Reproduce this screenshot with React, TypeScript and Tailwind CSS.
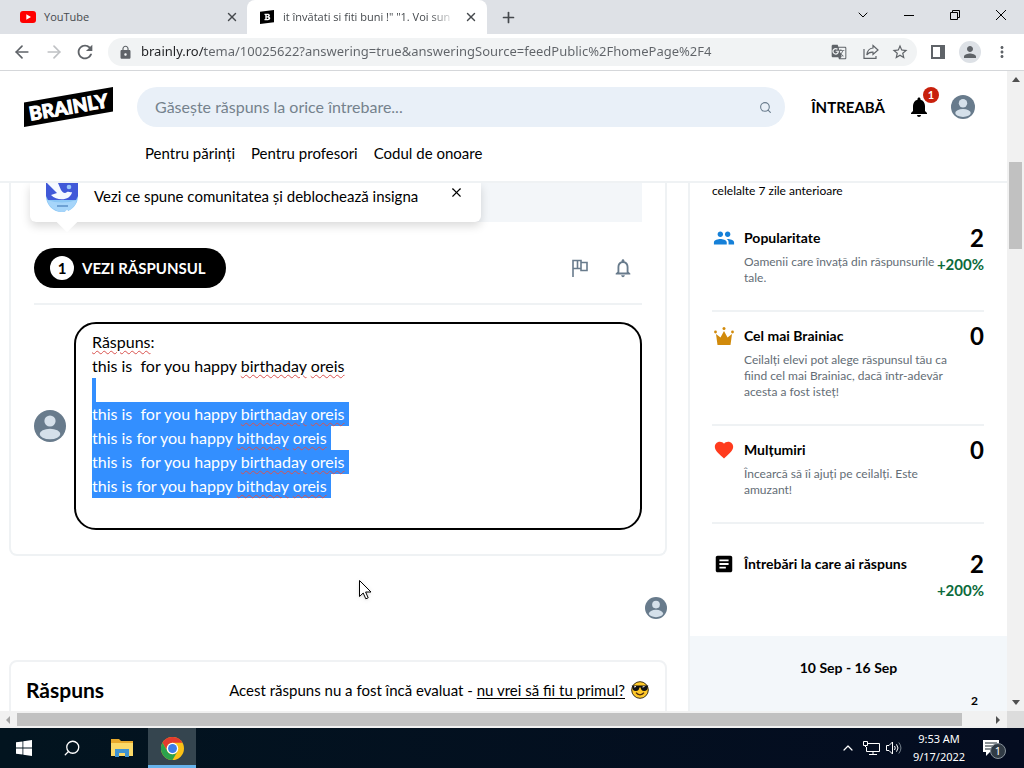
import type { ReactNode } from "react";
import { ArrowLeft, ArrowRight, Plus, Search, X, ChevronDown, ChevronUp } from "lucide-react";
import {
  MdLock,
  MdGTranslate,
  MdStarBorder,
  MdPerson,
  MdMoreVert,
  MdNotifications,
  MdNotificationsNone,
  MdPeople,
  MdFavorite,
  MdArticle,
  MdRefresh,
} from "react-icons/md";

const UI = "font-['Noto_Sans','Open_Sans',sans-serif]";

function Avatar({ className }: { className: string }) {
  return (
    <svg viewBox="0 0 32 32" className={className} aria-hidden="true">
      <circle cx="16" cy="16" r="16" fill="#687b8c" />
      <circle cx="16" cy="11" r="5.6" fill="#d5e0ea" />
      <ellipse cx="16" cy="24" rx="10.3" ry="5.3" fill="#d5e0ea" />
    </svg>
  );
}

function Tabs() {
  return (
    <div className="flex h-[34px] shrink-0 bg-[#dee1e6] font-['Open_Sans',sans-serif] text-[11px] text-[#45494d]">
      <div className="flex w-[247px] items-center pl-5 pr-2">
        <svg viewBox="0 0 16 12" className="h-3 w-4" aria-hidden="true">
          <rect width="16" height="12" rx="3" fill="#f00" />
          <path d="M6.3 3.3v5.4L11 6z" fill="#fff" />
        </svg>
        <button className="ml-2 flex-1 text-left">YouTube</button>
        <button aria-label="Close YouTube"><X className="size-[14px]" strokeWidth={2.4} /></button>
      </div>
      <div className="flex w-60 items-center rounded-t-lg bg-white pl-[13px] pr-[9px]">
        <svg viewBox="0 0 14 14" className="size-[14px] shrink-0" aria-hidden="true">
          <path d="M0 1.800 14 0v12.200L0 14z" fill="#000" />
          <path d="M4.500 3.800h3.200c2.600 0 2.800 2.400 1.300 3 2 .6 1.600 3.400-1.100 3.400H4.500V8.900h.8V5.100h-.8zM6.700 5.100v1.200h1c.8 0 .8-1.200 0-1.200zm0 2.400v1.400h1.100c.9 0 .9-1.400 0-1.400z" fill="#fff" />
        </svg>
        <button className="ml-[9px] min-w-0 flex-1 whitespace-nowrap text-left">
          <span className="inline-block [mask-image:linear-gradient(90deg,#000_88%,#0003)]">it învătati si fiti buni !&quot; &quot;1. Voi sun</span>
        </button>
        <button aria-label="Close tab"><X className="size-[14px]" strokeWidth={2.4} /></button>
      </div>
      <button aria-label="New tab" className="ml-[13px]"><Plus className="size-[17px]" strokeWidth={2.4} /></button>
      <div className="ml-auto flex items-center text-black">
        <button aria-label="Search tabs" className="flex w-[46px] justify-center pb-1"><ChevronDown className="size-4" strokeWidth={1.500} /></button>
        <button aria-label="Minimize" className="flex w-[46px] justify-center pb-1">
          <svg viewBox="0 0 10 10" className="size-[10px]"><path d="M0 5.500h10" stroke="#000" /></svg>
        </button>
        <button aria-label="Restore" className="flex w-[46px] justify-center pb-1">
          <svg viewBox="0 0 10 10" className="size-[10px]" fill="none" stroke="#000"><path d="M.5 2.500h7v7h-7zM2.500 2.500v-2h7v7h-2" /></svg>
        </button>
        <button aria-label="Close" className="flex w-[46px] justify-center pb-1">
          <svg viewBox="0 0 10 10" className="size-[10px]"><path d="m0 0 10 10M10 0 0 10" stroke="#000" /></svg>
        </button>
      </div>
    </div>
  );
}

function Toolbar() {
  return (
    <div className="flex h-[37px] shrink-0 items-center border-b border-[#d5d7da] bg-white pl-3 pr-[13px] text-[#5f6368]">
      <button aria-label="Back"><ArrowLeft className="size-5" /></button>
      <button aria-label="Forward" className="ml-3 text-[#bfc1c4]"><ArrowRight className="size-5" /></button>
      <button aria-label="Reload" className="ml-[10px]"><MdRefresh className="size-[22px]" /></button>
      <div className="ml-3 flex h-7 min-w-0 flex-1 items-center gap-4 rounded-full bg-[#f1f3f4] pl-[10px] pr-2">
        <MdLock className="-mr-2 size-[15px] shrink-0" />
        <input
          aria-label="Address"
          className="min-w-0 flex-1 bg-linear-to-r from-[#202124] from-[64px] to-[#5f6368] to-[64px] bg-clip-text text-[13px] text-transparent outline-none"
          defaultValue="brainly.ro/tema/10025622?answering=true&answeringSource=feedPublic%2FhomePage%2F4"
        />
        <button aria-label="Translate"><MdGTranslate className="size-4" /></button>
        <button aria-label="Share">
          <svg viewBox="0 0 16 16" className="size-4" fill="none" stroke="currentColor" strokeWidth="1.200">
            <path d="M1 5v9.400h12V12M10 1.500l5 4.500-5 4.500V8.200C7 8 5.300 8.700 3.800 11 4.200 7 6.300 4.300 10 4z" />
          </svg>
        </button>
        <button aria-label="Bookmark" className="-ml-1"><MdStarBorder className="size-[18px]" /></button>
      </div>
      <button aria-label="Side panel" className="ml-[14px]">
        <svg viewBox="0 0 14 14" className="size-[14px]"><path d="M0 0h14v14H0zM2 2v10h7V2z" fill="currentColor" fillRule="evenodd" /></svg>
      </button>
      <button aria-label="Profile" className="ml-[14px] flex size-[22px] items-center justify-center rounded-full bg-[#dde1e6]"><MdPerson className="size-[18px]" /></button>
      <button aria-label="Menu" className="ml-3"><MdMoreVert className="size-[18px]" /></button>
    </div>
  );
}

function SiteHeader() {
  return (
    <header className="shrink-0 border-b-2 border-[#eff2f4] bg-white pb-[18px] pt-4">
      <div className="flex items-center pl-6 pr-8">
        <a href="#" aria-label="Brainly" className="shrink-0">
          <svg viewBox="0 0 89 40" className="h-10 w-[89px]">
            <path d="M0 15.500 89 0v24.500L0 40z" />
            <text x="44.500" y="27" transform="rotate(-9.900 44.500 20)" textAnchor="middle" fill="#fff" stroke="#fff" strokeWidth="1" fontFamily="Lato" fontWeight="900" fontSize="19">BRAINLY</text>
          </svg>
        </a>
        <label className="ml-6 flex h-10 min-w-0 flex-1 items-center rounded-full bg-[#e9f0f8] pl-[18px] pr-[13px]">
          <input aria-label="Caută" placeholder="Găsește răspuns la orice întrebare..." className="min-w-0 flex-1 text-base text-black outline-none placeholder:text-[#75828d]" />
          <Search className="size-[13px] text-[#687b8c]" />
        </label>
        <a href="#" className="ml-[26px] text-[15px] font-bold">ÎNTREABĂ</a>
        <button aria-label="Notificări" className="relative ml-[22px]">
          <MdNotifications className="size-6" />
          <span className="absolute -top-2 left-4 flex size-4 items-center justify-center rounded-full bg-[#c8200c] text-[11px] font-bold text-white">1</span>
        </button>
        <button aria-label="Profil" className="ml-5"><Avatar className="size-6" /></button>
      </div>
      <nav className="flex gap-4 pl-[145px] pt-4 text-[15px] leading-5">
        <a href="#">Pentru părinți</a>
        <a href="#">Pentru profesori</a>
        <a href="#">Codul de onoare</a>
      </nav>
    </header>
  );
}

function Typo({ children }: { children: ReactNode }) {
  return <span className="underline decoration-[#d9534f] decoration-wavy decoration-1 underline-offset-2">{children}</span>;
}

const selected = [
  { lead: "this is  for you happy ", word: "birthaday" },
  { lead: "this is for you happy ", word: "bithday" },
  { lead: "this is  for you happy ", word: "birthaday" },
  { lead: "this is for you happy ", word: "bithday" },
];

function Question() {
  return (
    <section className="relative rounded-b-lg border-2 border-t-0 border-[#eff2f4] px-[23px] pb-6">
      <div className="h-[39px] bg-[#f3f6f9]" />
      <div className="absolute left-[19px] top-0 flex h-[39px] w-[451px] items-start rounded-b-md bg-white pl-4 pr-[17px] shadow-[0_4px_10px_rgba(0,0,0,0.15)]">
        <svg viewBox="0 0 32 29" className="h-[29px] w-8 shrink-0" aria-hidden="true">
          <path d="M0 0h32v13c0 8-6 16-16 16S0 21 0 13z" fill="#8bc7f5" />
          <path d="M0 0h32v13l-2 4H2l-2-4z" fill="#4159d8" />
          <path d="M1 0h11l3 7c2 3 4 4 6 2 2-1 3 1 5 0-1 8-14 10-21 3l6-2z" fill="#f6f9ff" />
          <path d="M1 17q15 5 30 0-3 11-15 12Q4 27 1 17z" fill="#a6d5fa" />
          <circle cx="23" cy="4" r="2.300" fill="#9bc8fa" />
          <path d="M11 23h11" stroke="#356cae" />
        </svg>
        <span className="ml-4 flex-1 whitespace-nowrap text-[15px] leading-[26px]">Vezi ce spune comunitatea și deblochează insigna</span>
        <button aria-label="Închide" className="pt-[2px]"><X className="size-[15px]" strokeWidth={1.800} /></button>
        <span className="absolute left-[29px] top-[30px] size-4 rotate-45 bg-white" />
      </div>
      <div className="flex items-center border-b-2 border-[#eff2f4] pb-[15px] pt-[26px]">
        <button className="flex h-10 items-center gap-2 rounded-full bg-black px-4 pr-5 text-[15px] font-bold text-white">
          <span className="flex size-6 items-center justify-center rounded-full bg-white text-black">1</span>
          VEZI RĂSPUNSUL
        </button>
        <button aria-label="Raportează" className="ml-auto text-[#687b8c]">
          <svg viewBox="0 0 16 18" className="h-[18px] w-4" fill="none" stroke="currentColor" strokeWidth="1.600"><path d="M1 18V1.500h8v2h6v8H9v-2H1M5.500 1.500v8M9 3.500v6" /></svg>
        </button>
        <button aria-label="Urmărește" className="ml-6 mr-2 text-[#687b8c]"><MdNotificationsNone className="size-[22px]" /></button>
      </div>
      <div className="mt-[17px] flex items-center gap-2">
        <Avatar className="size-8 shrink-0" />
        <div role="textbox" aria-label="Răspuns" contentEditable suppressContentEditableWarning spellCheck={false} className="min-h-[208px] flex-1 whitespace-pre rounded-[22px] border-2 border-black px-4 py-[6px] text-base leading-6 outline-none">
          <div><Typo>Răspuns</Typo>:</div>
          <div>this is  for you happy <Typo>birthaday</Typo> <Typo>oreis</Typo></div>
          <div className="h-6 w-1 bg-[#338fff]" />
          {selected.map((line, i) => (
            <div key={i} className="w-fit bg-[#338fff] pr-1 text-white">
              {line.lead}<Typo>{line.word}</Typo> <Typo>oreis</Typo>
            </div>
          ))}
        </div>
      </div>
    </section>
  );
}

function Sunglasses() {
  return (
    <svg viewBox="0 0 18 18" className="size-[18px] shrink-0" role="img" aria-label="emoji">
      <circle cx="9" cy="9" r="8.300" fill="#ffc928" stroke="#3c2f12" />
      <path d="M.7 4.500h16.600l-.5 1.300c-.2 2.800-1 4.200-3.700 4.200-2.400 0-3-1.400-3.500-3.400H8.400C8 8.600 7.300 10 4.900 10 2.200 10 1.400 8.600 1.200 5.800z" fill="#111" />
      <path d="M5 11.700c2 2.800 6 2.800 8 0" fill="none" stroke="#4e2a10" strokeWidth="1.300" />
      <path d="m3 6 2-.5M11.500 6l2-.5" stroke="#fff" />
    </svg>
  );
}

function Crown() {
  return (
    <svg viewBox="0 0 20 18" className="h-[18px] w-5" fill="#d18a0b" aria-hidden="true">
      <path d="m2 7 4.500 3.500L10 4l3.500 6.500L18 7l-1.500 11h-13z" />
      <circle cx="1.500" cy="5" r="1.400" /><circle cx="10" cy="1.500" r="1.500" /><circle cx="18.500" cy="5" r="1.400" />
    </svg>
  );
}

interface StatProps { icon: ReactNode; title: string; lines?: string[]; value: number; delta?: string }

function Stat({ icon, title, lines = [], value, delta }: StatProps) {
  return (
    <div className="flex">
      <div className="flex h-7 w-6 shrink-0 items-center justify-center">{icon}</div>
      <div className="ml-2 min-w-0 flex-1 whitespace-nowrap">
        <h3 className="text-sm font-bold leading-7">{title}</h3>
        <p className="pt-[2px] text-xs leading-4 text-[#646d76]">
          {lines.map((l) => <span key={l} className="block">{l}</span>)}
        </p>
      </div>
      <div className="text-right">
        <div className="text-2xl font-bold leading-7">{value}</div>
        {delta && <div className="text-[15px] font-bold leading-6 text-[#0c6b3c]">{delta}</div>}
      </div>
    </div>
  );
}

function Sidebar() {
  const divider = "border-b-2 border-[#eff2f4] pb-6";
  return (
    <aside className="flex w-[319px] shrink-0 flex-col border-l-2 border-[#eff2f4]">
      <div className="pl-[22px] pr-[23px]">
        <p className="text-xs leading-4">celelalte 7 zile anterioare</p>
        <div className={`${divider} pt-[25px]`}>
          <Stat icon={<MdPeople className="size-[22px] text-[#1580d8]" />} title="Popularitate" lines={["Oamenii care învață din răspunsurile", "tale."]} value={2} delta="+200%" />
        </div>
        <div className={`${divider} pt-[10px]`}>
          <Stat icon={<Crown />} title="Cel mai Brainiac" lines={["Ceilalți elevi pot alege răspunsul tău ca", "fiind cel mai Brainiac, dacă într-adevăr", "acesta a fost isteț!"]} value={0} />
        </div>
        <div className={`${divider} pt-[10px]`}>
          <Stat icon={<MdFavorite className="size-[22px] text-[#ff3b1d]" />} title="Mulțumiri" lines={["Încearcă să îi ajuți pe ceilalți. Este", "amuzant!"]} value={0} />
        </div>
        <div className="pb-[34px] pt-[26px]">
          <Stat icon={<MdArticle className="size-[22px]" />} title="Întrebări la care ai răspuns" value={2} delta="+200%" />
        </div>
      </div>
      <div className="flex-1 bg-[#f3f7fa] pt-[22px]">
        <div className="text-center text-sm font-bold leading-5">10 Sep - 16 Sep</div>
        <div className="pr-[29px] pt-[15px] text-right text-xs font-bold leading-4">2</div>
      </div>
    </aside>
  );
}

function Taskbar() {
  return (
    <footer className="flex h-10 shrink-0 items-center bg-linear-to-r from-[#02141f] to-[#040c20] text-white">
      <button aria-label="Start" className="flex h-10 w-12 items-center justify-center">
        <svg viewBox="0 0 16 16" className="size-4" fill="#fff"><path d="M0 2.300 6.500 1.400v6.100H0zM7.300 1.300 16 0v7.500H7.300zM0 8.400h6.500v6.200L0 13.700zM7.300 8.400H16V16l-8.700-1.300z" /></svg>
      </button>
      <button aria-label="Search" className="flex h-10 w-12 items-center justify-center"><Search className="size-[18px] -scale-x-100" strokeWidth={1.700} /></button>
      <button aria-label="File Explorer" className="flex h-10 w-[52px] items-center justify-center">
        <svg viewBox="0 0 22 18" className="h-[18px] w-[22px]">
          <path d="M0 0h8l2 2h12v15H0z" fill="#e8a92c" /><path d="M0 4h22v13H0z" fill="#fbd968" />
          <path d="M4 10h14v8h-4v-4H8v4H4z" fill="#3f93d2" />
        </svg>
      </button>
      <button aria-label="Chrome" className="flex h-10 w-12 items-center justify-center border-b-[3px] border-[#67b3ec] bg-[#35454f] pt-[3px]">
        <svg viewBox="0 0 48 48" className="size-[23px]">
          <circle cx="24" cy="24" r="24" fill="#fbc116" />
          <path d="M3.200 12A24 24 0 0 1 44.800 12H24a12 12 0 0 0-10.400 18z" fill="#e33b2e" />
          <path d="M3.200 12A24 24 0 0 0 24 48l10.400-18a12 12 0 0 1-20.800 0z" fill="#2ba24c" />
          <circle cx="24" cy="24" r="12" fill="#fff" /><circle cx="24" cy="24" r="9.300" fill="#3c7de8" />
        </svg>
      </button>
      <div className="ml-auto flex items-center pr-6">
        <button aria-label="Hidden icons"><ChevronUp className="size-4" strokeWidth={1.800} /></button>
        <svg viewBox="0 0 17 15" className="ml-[7px] h-[15px] w-[17px]" fill="none" stroke="#fff" aria-hidden="true">
          <path d="M5 2.500h11.500v8H3.500V6M10 10.500v3M6 13.500h8M.5.500h4v4h-4zM2.500 4.500V6" />
        </svg>
        <svg viewBox="0 0 17 14" className="ml-[6px] h-[14px] w-[17px]" fill="none" stroke="#fff" aria-hidden="true">
          <path d="M.5 4.500h2.500L6.500 1v12L3 9.500H.5zM8.500 5q1.500 2 0 4M10.500 3.300q3 3.700 0 7.400" /><path d="M12.800 1.500q4.300 5.500 0 11" stroke="#77838d" />
        </svg>
        <time className="ml-[8px] w-[56px] whitespace-nowrap text-center text-[11px] leading-[18px]">9:53 AM<br />9/17/2022</time>
        <button aria-label="Notifications" className="relative ml-[15px]">
          <svg viewBox="0 0 18 18" className="size-[18px]"><path d="M1 1h16v12H8l-4 4v-4H1z" fill="#fff" /><path d="M3 4h12M3 7h12M3 10h7" stroke="#17242d" /></svg>
          <span className="absolute left-2 top-1 flex size-4 items-center justify-center rounded-full border border-[#87919a] bg-[#313b45] text-[11px]">1</span>
        </button>
      </div>
    </footer>
  );
}

export default function App() {
  return (
    <div className={`relative flex h-screen flex-col overflow-hidden bg-white ${UI}`}>
      <Tabs />
      <Toolbar />
      <div className="flex min-h-0 flex-1 font-[Lato,sans-serif] text-black">
        <div className="flex min-w-0 flex-1 flex-col">
          <SiteHeader />
          <main className="flex min-h-0 flex-1 overflow-hidden">
            <div className="min-w-0 flex-1 pl-[9px] pr-[21px]">
              <Question />
              <div className="flex justify-end pt-[41px]"><Avatar className="size-[22px]" /></div>
              <section className="mt-[41px] flex h-24 items-start justify-between rounded-t-lg border-2 border-[#f0f2f4] pl-[15px] pr-4 pt-[14px]">
                <h2 className="text-[21px] font-bold leading-7">Răspuns</h2>
                <p className="flex items-center gap-[6px] text-[15px] leading-7">
                  <span>Acest răspuns nu a fost încă evaluat - <a href="#" className="underline underline-offset-2">nu vrei să fii tu primul?</a></span>
                  <Sunglasses />
                </p>
              </section>
            </div>
            <Sidebar />
          </main>
        </div>
        <div className="flex w-[17px] shrink-0 flex-col items-center bg-[#f1f1f1] py-[6px]" aria-hidden="true">
          <svg viewBox="0 0 8 5" className="h-[5px] w-2"><path d="M0 5 4 0l4 5z" fill="#505050" /></svg>
          <div className="mt-[80px] h-[87px] w-[13px] bg-[#c1c1c1]" />
          <svg viewBox="0 0 8 5" className="mt-auto h-[5px] w-2"><path d="M0 0h8L4 5z" fill="#505050" /></svg>
        </div>
      </div>
      <div className="flex h-[17px] shrink-0 items-center bg-[#f1f1f1]" aria-hidden="true">
        <svg viewBox="0 0 4 8" className="ml-[6px] h-2 w-1"><path d="M4 0v8L0 4z" fill="#a3a3a3" /></svg>
        <div className="ml-[7px] mr-[34px] h-[13px] flex-1 bg-[#c1c1c1]" />
        <svg viewBox="0 0 4 8" className="mr-[7px] h-2 w-1"><path d="M0 0v8l4-4z" fill="#505050" /></svg>
        <div className="h-full w-[17px] bg-[#dcdcdc]" />
      </div>
      <Taskbar />
      <svg viewBox="0 0 13 20" className="pointer-events-none absolute left-[359px] top-[580px] h-5 w-[13px] drop-shadow" aria-hidden="true">
        <path d="M.5.500v16l3.700-3.500 2.600 5.800 2.400-1L6.600 12H12z" fill="#fff" stroke="#000" />
      </svg>
    </div>
  );
}
